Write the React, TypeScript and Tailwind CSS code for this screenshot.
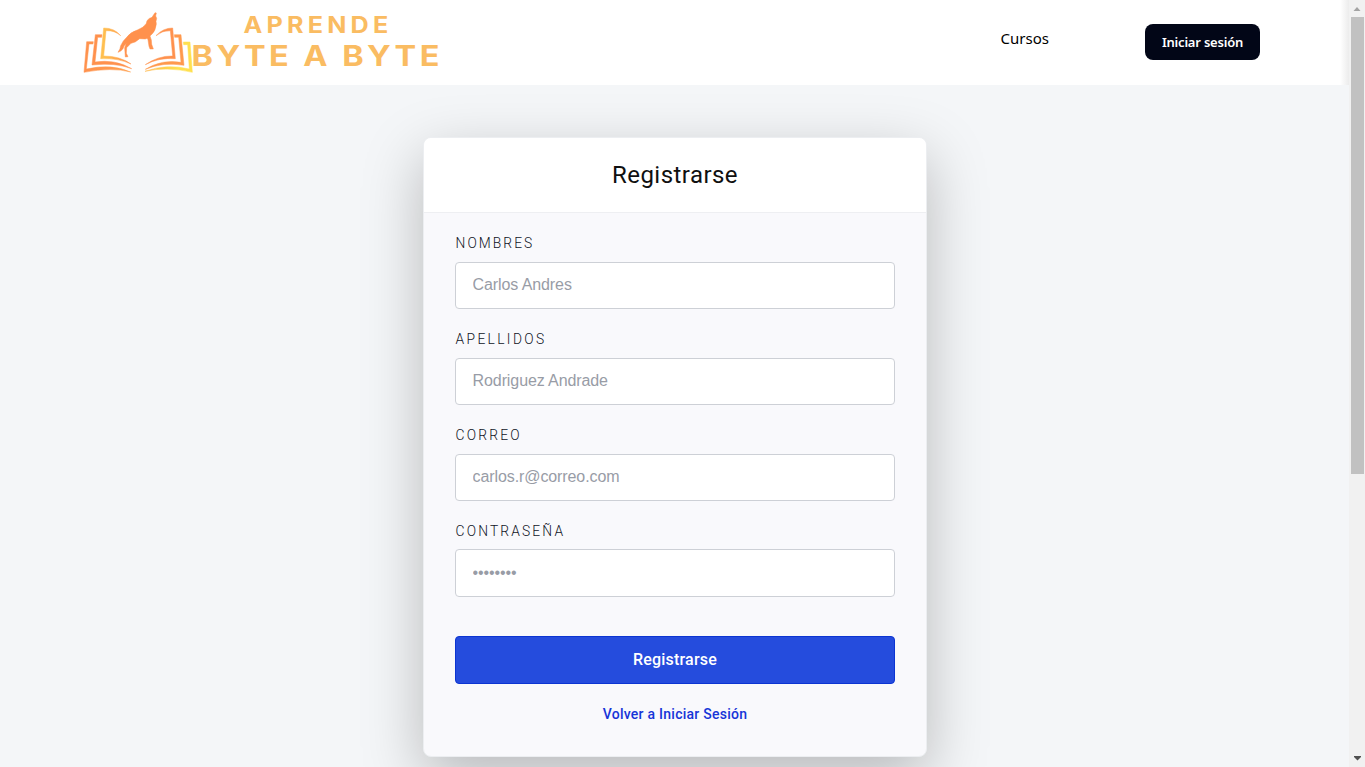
const fields = [
  { label: "Nombres", placeholder: "Carlos Andres", type: "text", tracking: "tracking-[2.05px]", box: "h-[47px]", gap: "h-[29px]" },
  { label: "Apellidos", placeholder: "Rodriguez Andrade", type: "text", tracking: "tracking-[2.35px]", box: "h-[47px]", gap: "h-[29px]" },
  { label: "Correo", placeholder: "carlos.r@correo.com", type: "email", tracking: "tracking-[2.2px]", box: "h-[47px]", gap: "h-[29px]" },
  { label: "Contraseña", placeholder: "••••••••", type: "password", tracking: "tracking-[2.15px]", box: "h-[48px]", gap: "h-[28px]" },
];

function Logo() {
  return (
    <svg className="block h-[85px] w-[375px]" viewBox="0 0 375 85" aria-label="Aprende Byte a Byte">
      <defs>
        <linearGradient id="left" x1="0" y1="0" x2="1" y2="0">
          <stop offset="0.1" stopColor="#ffbf4f" />
          <stop offset="0.9" stopColor="#ff944d" />
        </linearGradient>
        <linearGradient id="base" x1="0" y1="0" x2="1" y2="0">
          <stop offset="0" stopColor="#ff914d" />
          <stop offset="1" stopColor="#ffa04e" />
        </linearGradient>
        <linearGradient id="gold" x1="0" y1="0" x2="1" y2="0">
          <stop offset="0" stopColor="#ffb84e" />
          <stop offset="0.7" stopColor="#ffe04f" />
        </linearGradient>
      </defs>
      <g transform="scale(0.33333)" strokeWidth="1.5" strokeLinejoin="round">
        <path d="M55 125 L35 125 L27 217 Q110 201 167 216 Q110 190 34 207 L42 132 L54 132 Z" fill="url(#base)" stroke="url(#base)" />
        <path d="M81 104 L61 104 L51 195 Q120 187 170 206 Q121 177 60 186 L68 112 L80 112 Z" fill="#ff914d" stroke="#ff914d" />
        <path d="M137 107 Q119 84 86 84 L77 176 Q130 174 168 192 Q135 168 86 168 L93 92 Q119 91 137 107 Z" fill="url(#left)" stroke="url(#left)" />
        <path d="M325 126 L345 126 L352 217 Q275 199 210 214 Q275 190 343 207 L338 134 L326 134 Z" fill="url(#gold)" stroke="url(#gold)" />
        <path d="M298 104 L318 104 L327 196 Q265 185 211 208 Q260 177 318 187 L311 112 L299 112 Z" fill="#ff994d" stroke="#ff994d" />
        <path d="M243 107 Q264 84 293 84 L301 176 Q252 172 211 194 Q250 167 293 168 L286 92 Q263 91 243 107 Z" fill="#ff914d" stroke="#ff914d" />
        <path d="M129 157 Q136 148 137 137 Q143 123 155 112 Q165 97 187 90 Q207 83 214 70 L216 62 Q222 54 231 52 L240 38 L244 39 L242 48 L245 55 L243 64 L244 72 Q241 94 232 101 L225 108 L229 120 L230 133 L235 147 L225 147 L222 139 L219 119 L216 115 L211 117 L194 116 Q181 128 168 130 L155 143 L154 160 L159 170 L151 171 L149 143 L154 130 Q147 137 144 146 Q138 155 129 157 Z" fill="#ff914d" stroke="#ff914d" />
      </g>
      <g fill="#fabc62" fontFamily="Inter, sans-serif" fontWeight="700">
        <text transform="translate(168.5 32.9) scale(1.12 1)" fontSize="22.5" textLength="129.3" lengthAdjust="spacing">APRENDE</text>
        <text transform="translate(116.5 66) scale(1.14 1)" fontSize="28.5" textLength="217.5" lengthAdjust="spacing">BYTE A BYTE</text>
      </g>
    </svg>
  );
}

function Header() {
  return (
    <header className="flex h-[85px] shrink-0 bg-white pl-[75px] font-['Noto_Sans',sans-serif]">
      <Logo />
      <nav className="flex flex-1 items-start justify-end">
        <a href="#" className="mt-[26px] mr-[96px] text-[15px] leading-[24px] text-black">Cursos</a>
        <button className="mt-6 mr-[80px] h-9 w-[115px] rounded-lg bg-[#020617] pt-0.5 text-[13px] font-semibold tracking-[-0.2px] whitespace-nowrap text-white">
          Iniciar sesión
        </button>
        <span className="h-full w-[9px] bg-linear-to-r from-white to-[#ececec]" />
      </nav>
    </header>
  );
}

function RegisterCard() {
  return (
    <section className="mt-[52px] ml-[423px] h-[620px] w-[504px] overflow-hidden rounded-lg border border-[#eceef1] bg-[#f9f9fc] font-[Roboto,sans-serif] shadow-[0_20px_60px_rgba(0,0,0,0.25)]">
      <h1 className="h-[75px] border-b border-[#eeeff2] bg-white text-center text-[24px] leading-[74px] tracking-[0.45px] text-[#101010]">
        Registrarse
      </h1>
      <form className="flex flex-col px-[31px] pt-5">
        {fields.map((f) => (
          <label key={f.label} className="mb-5 flex h-[76px] flex-col">
            <span className={`${f.gap} pl-[0.6px] text-[13.8px] leading-[21px] font-light text-[#10141e] uppercase ${f.tracking}`}>{f.label}</span>
            <input
              type={f.type}
              placeholder={f.placeholder}
              className={`${f.box} w-full rounded-[4px] border border-[#cdd0d6] bg-white pr-4 pb-px pl-[16.6px] font-['Liberation_Sans',sans-serif] text-[16px] tracking-[-0.1px] placeholder:text-[#989ca6]`}
            />
          </label>
        ))}
        <button type="button" className="mt-[19px] h-12 rounded-[4px] border border-[#0c35d2] bg-[#254cdd] pb-px text-[16px] font-medium tracking-[0.2px] text-white">
          Registrarse
        </button>
        <a href="#" className="mt-5 text-center text-[14px] leading-5 font-medium tracking-[0.25px] text-[#1635d8]">
          Volver a Iniciar Sesión
        </a>
      </form>
    </section>
  );
}

function Scrollbar() {
  return (
    <aside className="flex w-4 shrink-0 flex-col items-center bg-[#f1f1f1]">
      <svg className="h-[17px] w-[14px]" viewBox="0 0 14 17"><path d="M3.5 11 L7 7 L10.5 11 Z" fill="#a3a3a3" /></svg>
      <div className="ml-px h-[457px] w-[13px] bg-[#c1c1c1]" />
      <svg className="mt-auto h-[17px] w-[14px]" viewBox="0 0 14 17"><path d="M4 6 H11 V7 L7.5 10.5 L4 7 Z" fill="#505050" /></svg>
    </aside>
  );
}

export default function App() {
  return (
    <div className="flex h-[767px] w-[1365px] overflow-hidden bg-[#f4f6f8]">
      <main className="flex min-w-0 flex-1 flex-col overflow-hidden">
        <Header />
        <div className="h-[682px] overflow-hidden">
          <div className="flow-root">
            <RegisterCard />
          </div>
        </div>
      </main>
      <Scrollbar />
    </div>
  );
}
